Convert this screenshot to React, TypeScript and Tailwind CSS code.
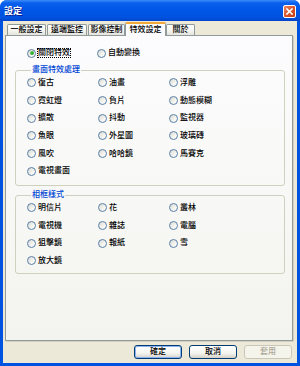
import React from "react";

const font = "font-['Liberation_Sans','Noto_Sans_CJK_TC',sans-serif]";

function Radio({ label, checked = false, focus = false }: { label: string; checked?: boolean; focus?: boolean }) {
  return (
    <div className="flex items-center h-full">
      <span className="w-[9px] h-[9px] shrink-0 rounded-full border border-[#5A7FA6] bg-[linear-gradient(135deg,#D9D9D3_0%,#F4F4F0_60%,#FFFFFF_100%)] flex items-center justify-center">
        {checked && <span className="w-[4px] h-[4px] rounded-full bg-[linear-gradient(135deg,#5BD15B,#1E961E)]" />}
      </span>
      <span
        className={
          "ml-[1px] px-[1px] leading-[10px] text-[8px] font-medium text-black " +
          (focus ? "outline outline-1 outline-dotted outline-black -outline-offset-1" : "")
        }
      >
        {label}
      </span>
    </div>
  );
}

function Group({ title, rows, height }: { title: string; rows: string[]; height: string }) {
  return (
    <fieldset className={"border border-[#D0D0BF] rounded-[3px] pl-[11px] pr-0 pb-0 " + height}>
      <legend className="ml-[4px] px-[1px] text-[8px] font-medium leading-[10px] text-[#0046D5]">{title}</legend>
      <div className="-mt-[1px] grid grid-cols-[71px_71px_71px] auto-rows-[17.7px]">
        {rows.map((r) => (
          <Radio key={r} label={r} />
        ))}
      </div>
    </fieldset>
  );
}

function Tab({ label, w, ml, selected = false }: { label: string; w: string; ml: string; selected?: boolean }) {
  if (selected) {
    return (
      <div
        className={
          "relative z-10 -mb-[1px] h-[14px] flex items-center justify-center border-x border-[#919B9C] border-t-[2px] border-t-[#F2A93A] rounded-t-[2px] bg-[#FCFCFE] text-[8px] font-medium leading-[10px] " +
          w +
          " " +
          ml
        }
      >
        {label}
      </div>
    );
  }
  return (
    <div
      className={
        "h-[11px] flex items-center justify-center border-x border-t border-[#919B9C] rounded-t-[2px] bg-[linear-gradient(180deg,#FFFFFF_0%,#F3F3EF_60%,#E4E3DC_100%)] text-[8px] font-medium leading-[10px] " +
        w +
        " " +
        ml
      }
    >
      {label}
    </div>
  );
}

function Button({ label, def = false, disabled = false }: { label: string; def?: boolean; disabled?: boolean }) {
  return (
    <div
      className={
        "w-[48px] h-[14px] rounded-[3px] border flex items-center justify-center text-[8px] font-medium leading-[10px] " +
        (disabled
          ? "border-[#C9C7BA] bg-[#F5F4EA] text-[#ACA899]"
          : "border-[#003C74] bg-[linear-gradient(180deg,#FFFFFF_0%,#F4F4F0_60%,#D6D0C5_100%)] text-black " +
            (def ? "shadow-[inset_0_0_0_1px_#8CB4F2]" : ""))
      }
    >
      {label}
    </div>
  );
}

export default function App() {
  const effects = ["復古", "油畫", "浮雕", "霓虹燈", "負片", "動態模糊", "擴散", "抖動", "監視器", "魚眼", "外星圖", "玻璃磚", "風吹", "哈哈鏡", "馬賽克", "電視畫面"];
  const frames = ["明信片", "花", "叢林", "電視機", "雜誌", "電腦", "狙擊鏡", "報紙", "雪", "放大鏡"];

  return (
    <div className={"w-[300px] h-[366px] flex flex-col bg-[#0053E1] rounded-t-[7px] overflow-hidden " + font}>
      <div className="h-[21px] shrink-0 flex items-center pl-[4px] pr-[4px] bg-[linear-gradient(180deg,#3C8CF7_0%,#0A60EE_14%,#0056E6_45%,#0052DF_85%,#0043C9_100%)]">
        <span className="text-white font-bold text-[9px] leading-[10px] [text-shadow:1px_1px_0_#0A1E8C]">設定</span>
        <div className="ml-auto mt-[1px] w-[13px] h-[13px] rounded-[2px] border border-white bg-[linear-gradient(135deg,#E98A68_0%,#D8542C_50%,#C2401A_100%)] flex items-center justify-center">
          <svg width="7" height="7" viewBox="0 0 7 7">
            <path d="M1 1 L6 6 M6 1 L1 6" stroke="white" strokeWidth="1.6" strokeLinecap="square" />
          </svg>
        </div>
      </div>

      <div className="flex-1 mx-[3px] mb-[3px] bg-[#ECE9D8] flex flex-col">
        <div className="h-[14px] mt-0 flex items-end pl-[4px]">
          <Tab label="一般設定" w="w-[39px]" ml="ml-0" />
          <Tab label="遠端監控" w="w-[40px]" ml="ml-[1px]" />
          <Tab label="影像控制" w="w-[37px]" ml="ml-[1px]" />
          <Tab label="特效設定" w="w-[41px]" ml="ml-0" selected />
          <Tab label="關於" w="w-[29px]" ml="ml-0" />
        </div>

        <div className="ml-[2px] w-[288px] h-[306px] border border-[#919B9C] shadow-[1px_1px_0_#D4D0C0] bg-[linear-gradient(180deg,#FCFCFE_0%,#F8F8F6_50%,#F3F3EF_100%)] pl-[9px] pr-[7px] pt-[12px] flex flex-col">
          <div className="h-[10px] pl-[12px] grid grid-cols-[70px_70px]">
            <Radio label="關閉特效" checked focus />
            <Radio label="自動變換" />
          </div>
          <div className="mt-[7px]">
            <Group title="畫面特效處理" rows={effects} height="h-[121px]" />
          </div>
          <div className="mt-[4px]">
            <Group title="相框樣式" rows={frames} height="h-[84px]" />
          </div>
        </div>

        <div className="mt-[4px] h-[14px] flex justify-end gap-[7px] pr-[5px]">
          <Button label="確定" def />
          <Button label="取消" />
          <Button label="套用" disabled />
        </div>
      </div>
    </div>
  );
}
